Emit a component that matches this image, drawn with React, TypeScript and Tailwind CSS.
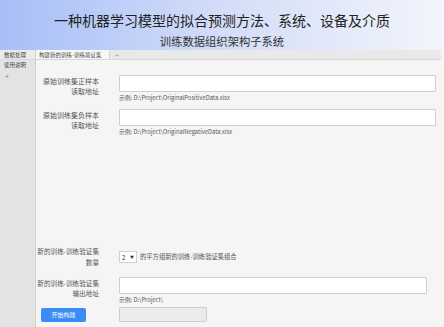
import React from "react";

const cjk = { fontFamily: '"Noto Sans CJK SC", "Noto Sans", sans-serif' };

function Label({ lines, lh = "leading-[10px]", size = "text-[7px]" }: { lines: string[]; lh?: string; size?: string }) {
    return (
        <div className={`w-[63px] shrink-0 flex flex-col items-end ${size} ${lh} text-[#555] whitespace-nowrap`}>
            {lines.map((l) => (
                <div key={l}>{l}</div>
            ))}
        </div>
    );
}

function Field({ label, hint, size }: { label: string[]; hint?: string; size?: string }) {
    return (
        <div className="flex">
            <div className="pt-[1px]">
                <Label lines={label} size={size} />
            </div>
            <div className="ml-[20px] flex-1">
                <div className="h-[17px] bg-white border border-[#cfcfcf] rounded-[1px]" />
                {hint && (
                    <div className="mt-[2px] text-[5.8px] leading-[8px] text-[#555]">{hint}</div>
                )}
            </div>
        </div>
    );
}

export default function App() {
    return (
        <div className="w-[444px] h-[327px] overflow-hidden flex flex-col bg-[#f5f5f5]" style={cjk}>
            {/* Header */}
            <div className="h-[50px] shrink-0 bg-gradient-to-r from-[#a7bef7] via-[#d3ddf8] to-[#f3f5fb] flex flex-col items-center">
                <div className="mt-[10px] text-[14px] leading-[20px] text-[#222]">
                    一种机器学习模型的拟合预测方法、系统、设备及介质
                </div>
                <div className="mt-[4px] text-[11.3px] leading-[14px] text-[#333]">训练数据组织架构子系统</div>
            </div>

            <div className="flex flex-1 min-h-0">
                {/* Sidebar */}
                <div className="w-[36px] shrink-0 bg-[#e3e3e3] border-r border-[#d0d0d0] text-[5.5px] text-[#444]">
                    <div className="h-[10px] leading-[10px] pl-[4px] bg-[#ebebeb] border-b border-[#d8d8d8]">数据处理</div>
                    <div className="h-[11px] leading-[11px] pl-[4px]">使用说明</div>
                    <div className="h-[10px] leading-[10px] pl-[5px] text-[7px] text-[#888]">+</div>
                </div>

                {/* Main */}
                <div className="flex-1 flex flex-col mr-[3px]">
                    <div className="h-[10px] shrink-0 bg-[#e9e9e9] border-b border-[#d6d6d6] flex items-stretch text-[5.5px] text-[#444]">
                        <div className="px-[3px] leading-[10px] bg-[#f7f7f7] border-r border-[#d6d6d6] w-[74px]">
                            构建新的训练-训练验证集
                        </div>
                        <div className="ml-[5px] leading-[10px] text-[7px] text-[#999]">+</div>
                    </div>

                    <div className="flex-1 pr-[5px]">
                        <div className="mt-[15px]">
                            <Field label={["原始训练集正样本", "读取地址"]} hint="示例:  D:\Project\OriginalPositiveData.xlsx" />
                        </div>
                        <div className="mt-[7px]">
                            <Field label={["原始训练集负样本", "读取地址"]} hint="示例:  D:\Project\OriginalNegativeData.xlsx" />
                        </div>

                        {/* Count row */}
                        <div className="mt-[110px] flex items-center">
                            <Label lines={["新的训练-训练验证集", "数量"]} lh="leading-[11px]" size="text-[6.6px]" />
                            <div className="ml-[20px] flex items-center">
                                <div className="w-[18px] h-[12px] bg-white border border-[#cfcfcf] flex items-center justify-between px-[2px] text-[6px] text-[#333]">
                                    <span>2</span>
                                    <span className="text-[4px]">▼</span>
                                </div>
                                <span className="ml-[3px] text-[6.3px] text-[#555]">的平方组新的训练-训练验证集组合</span>
                            </div>
                        </div>

                        <div className="mt-[9px] mr-[9px]">
                            <Field label={["新的训练-训练验证集", "输出地址"]} hint="示例:  D:\Project\" size="text-[6.6px]" />
                        </div>

                        <div className="mt-[3px] flex items-center">
                            <div className="w-[63px] shrink-0 flex">
                                <button className="ml-[5px] w-[45px] h-[14px] bg-[#3c8cf5] rounded-[2px] text-white text-[6px] leading-[14px] text-center">
                                    开始构建
                                </button>
                            </div>
                            <div className="ml-[20px] w-[88px] h-[15px] bg-[#ebebeb] border border-[#cfcfcf] rounded-[1px]" />
                        </div>
                    </div>
                </div>
            </div>
        </div>
    );
}
